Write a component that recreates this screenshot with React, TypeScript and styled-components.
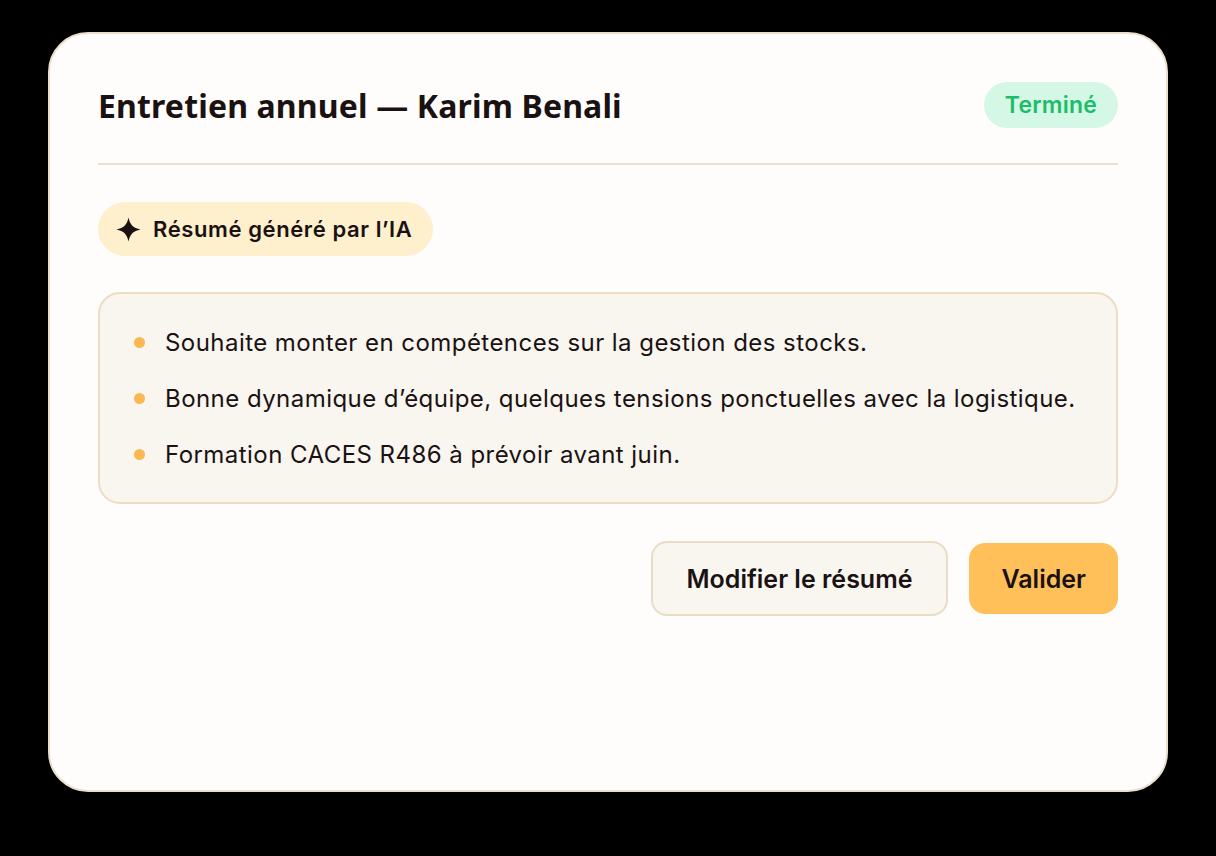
import styled, { createGlobalStyle } from 'styled-components';

const GlobalStyle = createGlobalStyle`
  html, body {
    margin: 0;
    padding: 0;
    background: #000;
  }
  body {
    font-family: Inter, 'Noto Sans', sans-serif;
  }
`;

const Page = styled.div`
  width: 1216px;
  height: 856px;
  padding: 32px 48px 0;
  box-sizing: border-box;
  background: #000;
`;

const Card = styled.div`
  width: 1120px;
  height: 760px;
  box-sizing: border-box;
  background: #fffdfb;
  border: 2px solid #eadfcd;
  border-radius: 40px;
  padding: 48px 48px;
  display: flex;
  flex-direction: column;
`;

const Header = styled.div`
  display: flex;
  align-items: center;
  justify-content: space-between;
  padding-bottom: 35px;
  border-bottom: 2px solid #ecdfcb;
`;

const Title = styled.h1`
  margin: 0;
  font-family: 'Noto Sans', Inter, sans-serif;
  font-size: 32px;
  font-weight: 700;
  color: #1a1212;
  letter-spacing: 0.15px;
`;

const StatusBadge = styled.span`
  height: 46px;
  padding: 0 21px;
  display: inline-flex;
  align-items: center;
  border-radius: 23px;
  background: #d5f7e6;
  color: #1cbd6a;
  font-size: 23px;
  font-weight: 600;
  letter-spacing: 0.2px;
`;

const AiBadge = styled.div`
  align-self: flex-start;
  margin-top: 37px;
  height: 54px;
  padding: 0 21px 0 18px;
  display: inline-flex;
  align-items: center;
  gap: 12px;
  border-radius: 27px;
  background: #feefcd;
  color: #1a1212;
  font-size: 22px;
  font-weight: 600;
  letter-spacing: 0.6px;
`;

const Summary = styled.ul`
  margin: 36px 0 0;
  padding: 20px 34px;
  list-style: none;
  background: #f9f5ef;
  border: 2px solid #ecdcc2;
  border-radius: 22px;
  display: flex;
  flex-direction: column;
`;

const Item = styled.li`
  height: 56px;
  display: flex;
  align-items: center;
  gap: 20px;
  font-size: 24px;
  letter-spacing: 0.45px;
  color: #1a1212;
`;

const Dot = styled.span`
  width: 11px;
  height: 11px;
  border-radius: 50%;
  background: #fbb852;
  flex-shrink: 0;
`;

const Actions = styled.div`
  margin-top: 37px;
  display: flex;
  justify-content: flex-end;
  align-items: center;
  gap: 21px;
`;

const Button = styled.button<{ $primary?: boolean }>`
  font-family: Inter, 'Noto Sans', sans-serif;
  font-size: 25px;
  font-weight: 600;
  color: #1a1212;
  border-radius: 16px;
  cursor: pointer;
  ${({ $primary }) =>
    $primary
      ? `
    height: 71px;
    padding: 0 32px;
    background: #ffc05a;
    border: none;
  `
      : `
    height: 75px;
    padding: 0 34px;
    background: #f9f5ef;
    border: 2px solid #eadcc2;
  `}
`;

function Sparkle() {
  return (
    <svg width="25" height="25" viewBox="0 0 24 24" aria-hidden>
      <path
        d="M12 0.5 C13.4 7.4 16.6 10.6 23.5 12 C16.6 13.4 13.4 16.6 12 23.5 C10.6 16.6 7.4 13.4 0.5 12 C7.4 10.6 10.6 7.4 12 0.5 Z"
        fill="#1a1212"
      />
    </svg>
  );
}

const points = [
  'Souhaite monter en compétences sur la gestion des stocks.',
  'Bonne dynamique d’équipe, quelques tensions ponctuelles avec la logistique.',
  'Formation CACES R486 à prévoir avant juin.',
];

export default function App() {
  return (
    <>
      <GlobalStyle />
      <Page>
        <Card>
          <Header>
            <Title>Entretien annuel — Karim Benali</Title>
            <StatusBadge>Terminé</StatusBadge>
          </Header>
          <AiBadge>
            <Sparkle />
            Résumé généré par l’IA
          </AiBadge>
          <Summary>
            {points.map((p) => (
              <Item key={p}>
                <Dot />
                {p}
              </Item>
            ))}
          </Summary>
          <Actions>
            <Button>Modifier le résumé</Button>
            <Button $primary>Valider</Button>
          </Actions>
        </Card>
      </Page>
    </>
  );
}
